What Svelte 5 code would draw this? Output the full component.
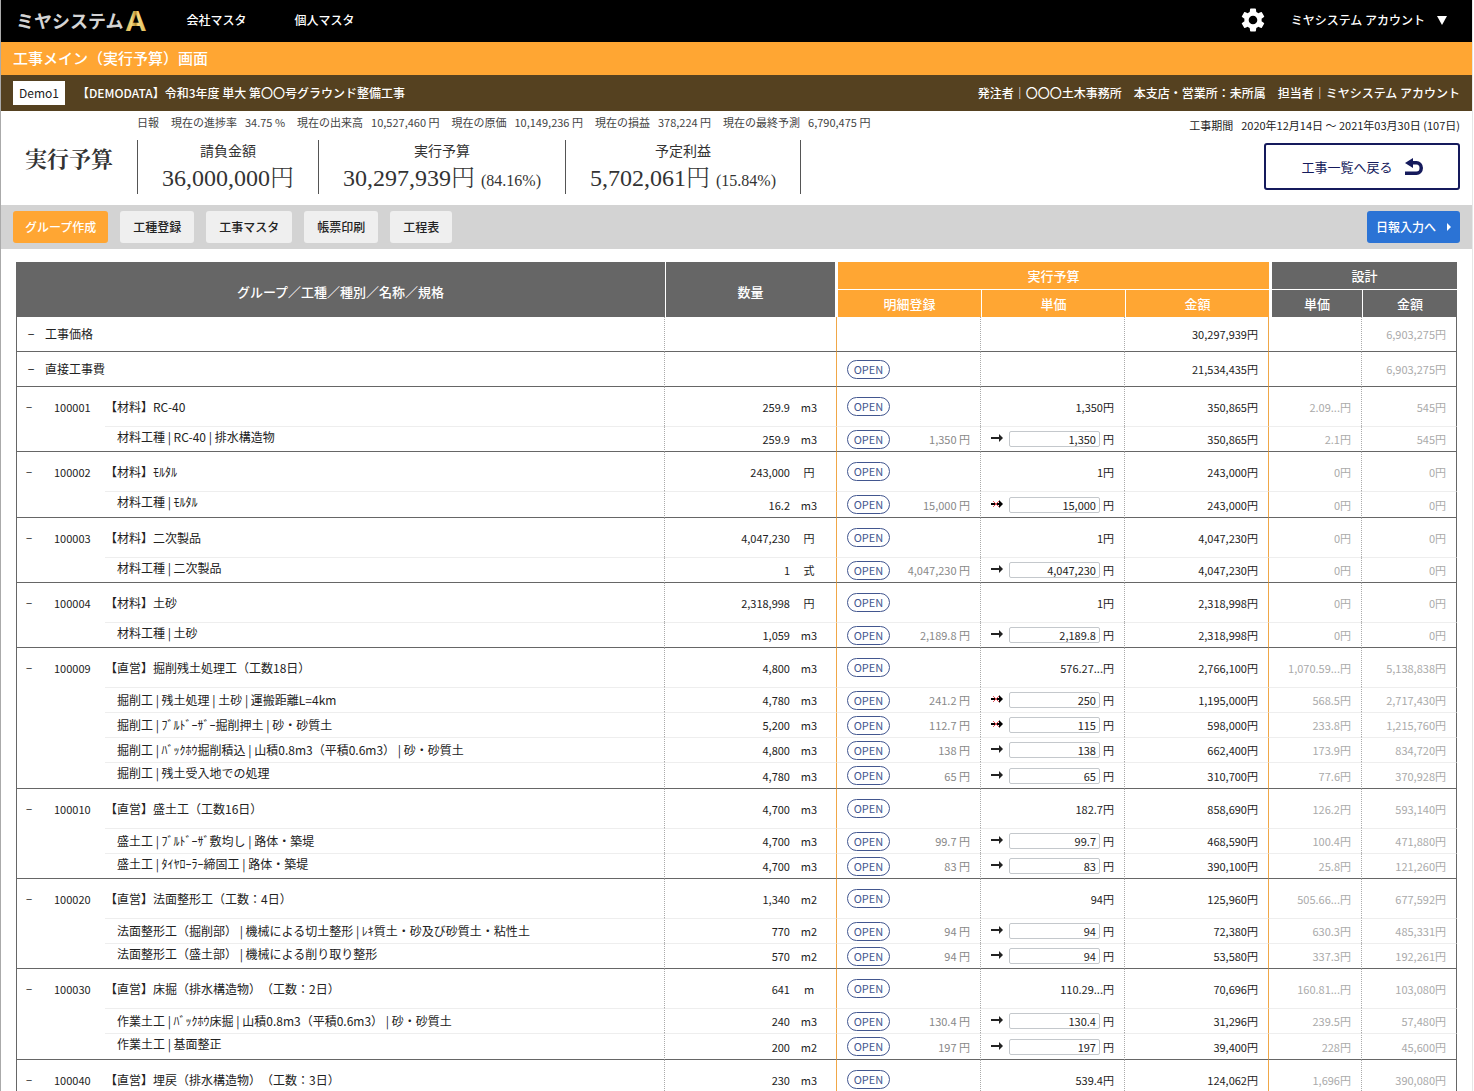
<script>
  const stats = [
    ['現在の進捗率', '34.75 %'],
    ['現在の出来高', '10,527,460 円'],
    ['現在の原価', '10,149,236 円'],
    ['現在の損益', '378,224 円'],
    ['現在の最終予測', '6,790,475 円'],
  ];
  const totals = [
    { label: '請負金額', value: '36,000,000', rate: '' },
    { label: '実行予算', value: '30,297,939', rate: '(84.16%)' },
    { label: '予定利益', value: '5,702,061', rate: '(15.84%)' },
  ];
  const tools = ['グループ作成', '工種登録', '工事マスタ', '帳票印刷', '工程表'];

  const sections = [
    { name: '工事価格', open: false, amount: '30,297,939', design: '6,903,275' },
    { name: '直接工事費', open: true, amount: '21,534,435', design: '6,903,275' },
  ];

  // items: name, quantity, unit, cost, entered price, differs, amount, design price, design amount
  const groups = [
    {
      code: '100001', name: '【材料】RC-40', qty: '259.9', unit: 'm3', price: '1,350', amount: '350,865', dp: '2.09...', da: '545',
      items: [['材料工種 | RC-40 | 排水構造物', '259.9', 'm3', '1,350', '1,350', false, '350,865', '2.1', '545']],
    },
    {
      code: '100002', name: '【材料】ﾓﾙﾀﾙ', qty: '243,000', unit: '円', price: '1', amount: '243,000', dp: '0', da: '0',
      items: [['材料工種 | ﾓﾙﾀﾙ', '16.2', 'm3', '15,000', '15,000', true, '243,000', '0', '0']],
    },
    {
      code: '100003', name: '【材料】二次製品', qty: '4,047,230', unit: '円', price: '1', amount: '4,047,230', dp: '0', da: '0',
      items: [['材料工種 | 二次製品', '1', '式', '4,047,230', '4,047,230', false, '4,047,230', '0', '0']],
    },
    {
      code: '100004', name: '【材料】土砂', qty: '2,318,998', unit: '円', price: '1', amount: '2,318,998', dp: '0', da: '0',
      items: [['材料工種 | 土砂', '1,059', 'm3', '2,189.8', '2,189.8', false, '2,318,998', '0', '0']],
    },
    {
      code: '100009', name: '【直営】掘削残土処理工（工数18日）', qty: '4,800', unit: 'm3', price: '576.27...', amount: '2,766,100', dp: '1,070.59...', da: '5,138,838',
      items: [
        ['掘削工 | 残土処理 | 土砂 | 運搬距離L=4km', '4,780', 'm3', '241.2', '250', true, '1,195,000', '568.5', '2,717,430'],
        ['掘削工 | ﾌﾞﾙﾄﾞｰｻﾞｰ掘削押土 | 砂・砂質土', '5,200', 'm3', '112.7', '115', true, '598,000', '233.8', '1,215,760'],
        ['掘削工 | ﾊﾞｯｸﾎｳ掘削積込 | 山積0.8m3（平積0.6m3） | 砂・砂質土', '4,800', 'm3', '138', '138', false, '662,400', '173.9', '834,720'],
        ['掘削工 | 残土受入地での処理', '4,780', 'm3', '65', '65', false, '310,700', '77.6', '370,928'],
      ],
    },
    {
      code: '100010', name: '【直営】盛土工（工数16日）', qty: '4,700', unit: 'm3', price: '182.7', amount: '858,690', dp: '126.2', da: '593,140',
      items: [
        ['盛土工 | ﾌﾞﾙﾄﾞｰｻﾞ敷均し | 路体・築堤', '4,700', 'm3', '99.7', '99.7', false, '468,590', '100.4', '471,880'],
        ['盛土工 | ﾀｲﾔﾛｰﾗｰ締固工 | 路体・築堤', '4,700', 'm3', '83', '83', false, '390,100', '25.8', '121,260'],
      ],
    },
    {
      code: '100020', name: '【直営】法面整形工（工数：4日）', qty: '1,340', unit: 'm2', price: '94', amount: '125,960', dp: '505.66...', da: '677,592',
      items: [
        ['法面整形工（掘削部） | 機械による切土整形 | ﾚｷ質土・砂及び砂質土・粘性土', '770', 'm2', '94', '94', false, '72,380', '630.3', '485,331'],
        ['法面整形工（盛土部） | 機械による削り取り整形', '570', 'm2', '94', '94', false, '53,580', '337.3', '192,261'],
      ],
    },
    {
      code: '100030', name: '【直営】床掘（排水構造物）（工数：2日）', qty: '641', unit: 'm', price: '110.29...', amount: '70,696', dp: '160.81...', da: '103,080',
      items: [
        ['作業土工 | ﾊﾞｯｸﾎｳ床掘 | 山積0.8m3（平積0.6m3） | 砂・砂質土', '240', 'm3', '130.4', '130.4', false, '31,296', '239.5', '57,480'],
        ['作業土工 | 基面整正', '200', 'm2', '197', '197', false, '39,400', '228', '45,600'],
      ],
    },
    {
      code: '100040', name: '【直営】埋戻（排水構造物）（工数：3日）', qty: '230', unit: 'm3', price: '539.4', amount: '124,062', dp: '1,696', da: '390,080',
      items: [],
    },
  ];
</script>

<div class="page">
  <header class="topbar">
    <a class="logo" href="#home">
      <span>ミヤシステム</span>
      <svg viewBox="0 0 26 36" width="26" height="36" aria-hidden="true">
        <defs>
          <linearGradient id="gold" x1="0" y1="0" x2="1" y2="0">
            <stop offset="0" stop-color="#d9b04a" />
            <stop offset="0.3" stop-color="#f3d77e" />
            <stop offset="0.5" stop-color="#b98d2c" />
            <stop offset="0.6" stop-color="#f6dc86" />
            <stop offset="1" stop-color="#dcb650" />
          </linearGradient>
        </defs>
        <text class="mark" x="2" y="29" fill="url(#gold)">A</text>
      </svg>
    </a>
    <nav>
      <a href="#company">会社マスタ</a>
      <a href="#personal">個人マスタ</a>
    </nav>
    <button class="gear" aria-label="設定">
      <svg viewBox="2 2 20 20" width="24" height="24" aria-hidden="true">
        <path fill="#fff" d="M19.14 12.94c.04-.3.06-.61.06-.94 0-.32-.02-.64-.07-.94l2.03-1.58a.49.49 0 0 0 .12-.61l-1.92-3.32a.488.488 0 0 0-.59-.22l-2.39.96c-.5-.38-1.03-.7-1.62-.94l-.36-2.54a.484.484 0 0 0-.48-.41h-3.84c-.24 0-.43.17-.47.41l-.36 2.54c-.59.24-1.13.57-1.62.94l-2.39-.96c-.22-.08-.47 0-.59.22L2.74 8.87c-.12.21-.08.47.12.61l2.03 1.58c-.05.3-.09.63-.09.94s.02.64.07.94l-2.03 1.58a.49.49 0 0 0-.12.61l1.92 3.32c.12.22.37.29.59.22l2.39-.96c.5.38 1.03.7 1.62.94l.36 2.54c.05.24.24.41.48.41h3.84c.24 0 .44-.17.47-.41l.36-2.54c.59-.24 1.13-.56 1.62-.94l2.39.96c.22.08.47 0 .59-.22l1.92-3.32c.12-.22.07-.47-.12-.61l-2.01-1.58zM12 15.6A3.61 3.61 0 0 1 8.4 12c0-1.98 1.62-3.6 3.6-3.6s3.6 1.62 3.6 3.6-1.62 3.6-3.6 3.6z" />
      </svg>
    </button>
    <button class="account">ミヤシステム アカウント
      <svg viewBox="0 0 10 9" width="10" height="9" aria-hidden="true"><path fill="#fff" d="M0 0h10L5 9z" /></svg>
    </button>
  </header>

  <h1>工事メイン（実行予算）画面</h1>

  <div class="project">
    <span class="tag">Demo1</span>
    <span class="pname">【DEMODATA】令和3年度 単大 第〇〇号グラウンド整備工事</span>
    <span class="pinfo">発注者｜〇〇〇土木事務所　本支店・営業所：未所属　担当者｜ミヤシステム アカウント</span>
  </div>

  <section class="summary">
    <h2>実行予算</h2>
    <div class="figures">
      <div class="stats">
        <span>日報</span>
        {#each stats as [label, value]}
          <span class="stat">{label}<b>{value}</b></span>
        {/each}
      </div>
      <div class="totals">
        {#each totals as t}
          <div class="total">
            <span class="label">{t.label}</span>
            <span class="value">{t.value}円{#if t.rate}<small>{t.rate}</small>{/if}</span>
          </div>
        {/each}
      </div>
    </div>
    <div class="period">
      <p>工事期間<b>2020年12月14日 ～ 2021年03月30日 (107日)</b></p>
      <button class="back">工事一覧へ戻る
        <svg viewBox="0 0 18 18" width="18" height="18" aria-hidden="true">
          <path fill="#151a5c" d="M0 5 8 0v3h3.500a6.500 7 0 0 1 0 14H0v-3.500h11.500a3 3.500 0 0 0 0-7H8V10z" />
        </svg>
      </button>
    </div>
  </section>

  <div class="toolbar">
    {#each tools as tool, i}
      <button class:active={i === 0}>{tool}</button>
    {/each}
    <button class="daily">日報入力へ
      <svg viewBox="0 0 4 8" width="4" height="8" aria-hidden="true"><path fill="#fff" d="M0 0l4 4-4 4z" /></svg>
    </button>
  </div>

  {#snippet openButton()}
    <button class="open">OPEN</button>
  {/snippet}

  <main>
    <table>
      <colgroup>
        <col class="c-code" /><col /><col class="c-qty" />
        <col class="c-plan" /><col class="c-plan" /><col class="c-plan" />
        <col class="c-dprice" /><col class="c-damount" />
      </colgroup>
      <thead>
        <tr>
          <th colspan="2" rowspan="2" class="tall">グループ／工種／種別／名称／規格</th>
          <th rowspan="2" class="tall line qty-head">数量</th>
          <th colspan="3" class="plan line under">実行予算</th>
          <th colspan="2" class="design under">設計</th>
        </tr>
        <tr>
          <th class="plan line">明細登録</th>
          <th class="plan line">単価</th>
          <th class="plan line">金額</th>
          <th class="design">単価</th>
          <th class="line">金額</th>
        </tr>
      </thead>
      {#each sections as s}
        <tbody>
          <tr class="section last">
            <td colspan="2" class="name dotted"><button class="fold" aria-label="折りたたむ">−</button>{s.name}</td>
            <td class="solid"></td>
            <td class="dotted detail">{#if s.open}{@render openButton()}{/if}</td>
            <td class="dotted"></td>
            <td class="solid num">{s.amount}円</td>
            <td class="dotted"></td>
            <td class="num faint">{s.design}円</td>
          </tr>
        </tbody>
      {/each}
      {#each groups as g}
        <tbody>
          <tr class="group">
            <td class="code"><button class="fold" aria-label="折りたたむ">−</button>{g.code}</td>
            <td class="dotted">{g.name}</td>
            <td class="solid num"><span class="qty">{g.qty}<i>{g.unit}</i></span></td>
            <td class="dotted detail">{@render openButton()}</td>
            <td class="dotted num">{g.price}円</td>
            <td class="solid num">{g.amount}円</td>
            <td class="dotted num faint">{g.dp}円</td>
            <td class="num faint">{g.da}円</td>
          </tr>
          {#each g.items as [name, qty, unit, cost, price, differs, amount, dp, da], i}
            <tr class="item" class:last={i === g.items.length - 1}>
              <td class="blank"></td>
              <td class="iname dotted">{name}</td>
              <td class="solid num"><span class="qty">{qty}<i>{unit}</i></span></td>
              <td class="dotted detail"><div class="cost">{@render openButton()}<span>{cost} 円</span></div></td>
              <td class="dotted num">
                <label class="entry">
                  <svg viewBox="0 0 12 10" width="12" height="10" aria-hidden="true">
                    {#if differs}
                      <path fill="#000" d="M0 3h4v2H0zM6 3h2V0l4 4-4 4V5H6z" />
                      <path stroke="#e0555b" d="M2 1l6 6M8 1L2 7" />
                    {:else}
                      <path fill="#222" d="M0 3h8V0l4 4-4 4V5H0z" />
                    {/if}
                  </svg>
                  <input value={price} aria-label="単価" />円
                </label>
              </td>
              <td class="solid num">{amount}円</td>
              <td class="dotted num faint">{dp}円</td>
              <td class="num faint">{da}円</td>
            </tr>
          {/each}
        </tbody>
      {/each}
    </table>
  </main>
</div>

<style>
  :global(body) {
    background: #fff;
    overflow: hidden;
  }
  .page {
    --sans: 'Noto Sans CJK JP', sans-serif;
    --serif: 'Liberation Serif', 'Noto Serif CJK JP', 'Noto Sans CJK JP', serif;
    box-sizing: border-box;
    margin-right: 1px;
    border-left: 1px solid #aaa;
    border-right: 1px solid #e6e6e6;
    font: 12px/18px var(--sans);
    text-spacing-trim: space-all;
    color: #222;
  }
  button {
    font: inherit;
    color: inherit;
    background: none;
    border: 0;
    padding: 0;
    cursor: pointer;
  }
  a {
    color: inherit;
    text-decoration: none;
  }
  .topbar {
    display: flex;
    align-items: center;
    box-sizing: border-box;
    height: 42px;
    padding: 0 25px 2px 15px;
    background: #000;
    color: #fff;
    font-weight: 500;
  }
  .logo {
    display: flex;
    align-items: center;
    color: #d4d4d4;
    font-size: 18px;
    font-weight: 700;
  }
  .mark {
    font: bold 30px 'Liberation Sans', sans-serif;
  }
  nav {
    display: flex;
    gap: 48px;
    margin-left: 37px;
    flex: 1;
  }
  .gear svg,
  .account svg,
  .back svg,
  .daily svg {
    display: block;
  }
  .account {
    display: flex;
    align-items: center;
    gap: 12px;
    margin-left: 26px;
  }
  h1 {
    margin: 0;
    padding: 0 12px 2px;
    background: #ffa633;
    color: #fff;
    font-size: 15px;
    line-height: 31px;
    font-weight: 500;
  }
  .project {
    display: flex;
    align-items: center;
    height: 36px;
    padding: 0 12px;
    background: #554120;
    color: #fff;
    font-weight: 500;
  }
  .tag {
    padding: 0 6px;
    background: #fff;
    color: #222;
    line-height: 24px;
    font-weight: 400;
  }
  .pname {
    flex: 1;
    margin-left: 12px;
  }
  .summary {
    display: flex;
    height: 94px;
    padding: 0 12px;
  }
  h2 {
    box-sizing: border-box;
    width: 124px;
    margin: 0;
    padding: 31px 0 0 12px;
    font: bold 22px/32px 'Noto Serif CJK JP', 'Noto Serif JP', 'Noto Sans CJK JP', serif;
    color: #333;
  }
  .figures {
    flex: 1;
  }
  b {
    font-weight: 400;
  }
  .stats {
    display: flex;
    gap: 12px;
    padding-top: 2px;
    font-size: 11px;
    color: #444;
  }
  .stat b,
  .period b {
    margin-left: 8px;
  }
  .totals {
    display: flex;
    margin-top: 9px;
  }
  .total {
    display: flex;
    flex-direction: column;
    align-items: center;
    height: 54px;
    padding: 0 24px;
    border-left: 1px solid #555;
    color: #333;
  }
  .total:last-child {
    border-right: 1px solid #555;
  }
  .label {
    font-size: 14px;
    line-height: 20px;
  }
  .value {
    font: 300 24px/36px var(--serif);
  }
  small {
    margin-left: 6px;
    font-size: 16px;
  }
  .period {
    display: flex;
    flex-direction: column;
    align-items: flex-end;
  }
  .period p {
    margin: 5px 0 9px;
    font-size: 11px;
  }
  .back {
    display: flex;
    align-items: center;
    justify-content: center;
    gap: 12px;
    box-sizing: border-box;
    width: 196px;
    height: 47px;
    border: 2px solid #151a5c;
    border-radius: 3px;
    color: #151a5c;
    font-size: 13px;
  }
  .toolbar {
    display: flex;
    align-items: center;
    gap: 12px;
    height: 44px;
    padding: 0 12px;
    background: #d3d3d3;
  }
  .toolbar button {
    height: 32px;
    padding: 0 13px;
    border-radius: 3px;
    background: #efefef;
    font-weight: 500;
  }
  .toolbar .active {
    padding: 0 12px;
    background: #ffa633;
    color: #fff;
  }
  .toolbar .daily {
    display: flex;
    align-items: center;
    gap: 11px;
    margin-left: auto;
    padding: 0 9px;
    background: #2b73d5;
    color: #fff;
  }
  main {
    padding: 13px 15px 0;
  }
  table {
    width: 100%;
    table-layout: fixed;
    border-collapse: separate;
    border-spacing: 0;
  }
  .c-code { width: 89px; }
  .c-qty { width: 172px; }
  .c-plan { width: 144px; }
  .c-dprice { width: 93px; }
  .c-damount { width: 95px; }
  th {
    box-sizing: border-box;
    height: 27px;
    padding: 0;
    background: #666;
    color: #fff;
    font-size: 13px;
    font-weight: 500;
  }
  th.under {
    height: 28px;
    border-bottom: 1px solid #fff;
  }
  th.tall { padding-top: 4px; }
  th.line { border-left: 1px solid #fff; }
  th.qty-head { border-right: 2px solid #fff; }
  th.plan { background: #ffa633; }
  th.design { border-left: 3px solid #fff; }
  td {
    box-sizing: border-box;
    padding: 0;
    white-space: nowrap;
  }
  td:first-child { border-left: 1px solid #666; }
  td:last-child { border-right: 1px solid #666; }
  .last td { border-bottom: 1px solid #666; }
  .dotted { border-right: 1px dotted #aaa; }
  .solid { border-right: 1px solid #f0a748; }
  .section td { height: 35px; }
  .group td { height: 39px; }
  .item td {
    height: 25px;
    border-top: 1px solid #eee;
  }
  .item .blank { border-top: 0; }
  .item.last td { height: 26px; }
  tbody:nth-of-type(3n + 1) .item.last td { height: 27px; }
  .fold {
    width: 28px;
    text-align: center;
  }
  .group .fold {
    width: 24px;
    margin-right: 13px;
  }
  .code { font-size: 11px; }
  .iname { padding-left: 12px; }
  .last .iname { padding-bottom: 5px; }
  td.solid:nth-child(3) { border-left: 0; }
  .num {
    padding-right: 10px;
    text-align: right;
    font-size: 11px;
  }
  td.faint { color: #aaa; }
  .qty {
    display: flex;
    justify-content: flex-end;
    margin-right: -2px;
  }
  .qty i {
    width: 38px;
    text-align: center;
    font-style: normal;
  }
  .detail { padding: 0 10px; }
  .open {
    display: block;
    box-sizing: border-box;
    width: 43px;
    height: 19px;
    border: 1px solid #42568f;
    border-radius: 10px;
    color: #42568f;
    font-size: 11px;
    line-height: 17px;
  }
  .cost {
    display: flex;
    align-items: center;
    justify-content: space-between;
    font-size: 11px;
    color: #888;
  }
  .entry {
    display: flex;
    align-items: center;
    justify-content: flex-end;
  }
  .entry svg { margin-right: 6px; }
  input {
    box-sizing: border-box;
    width: 91px;
    height: 16px;
    margin: 0 3px 0 0;
    padding: 0 3px;
    border: 1px solid #c4c8cc;
    border-radius: 2px;
    font: 11px/14px var(--sans);
    color: #222;
    text-align: right;
  }
</style>
